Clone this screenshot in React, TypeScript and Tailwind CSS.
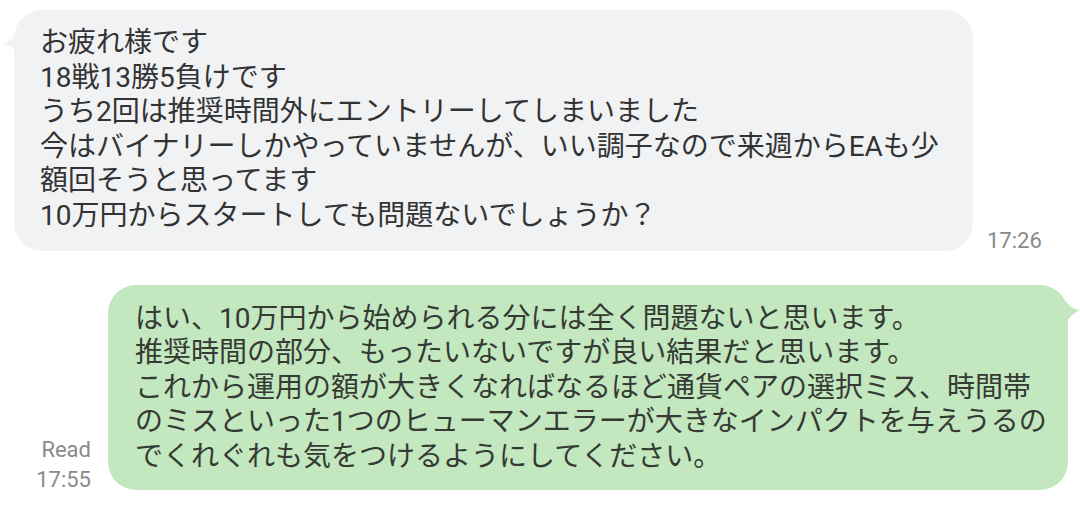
import React from 'react';

const incoming = [
  'お疲れ様です',
  '18戦13勝5負けです',
  'うち2回は推奨時間外にエントリーしてしまいました',
  '今はバイナリーしかやっていませんが、いい調子なので来週からEAも少',
  '額回そうと思ってます',
  '10万円からスタートしても問題ないでしょうか？',
];

const outgoing = [
  'はい、10万円から始められる分には全く問題ないと思います。',
  '推奨時間の部分、もったいないですが良い結果だと思います。',
  'これから運用の額が大きくなればなるほど通貨ペアの選択ミス、時間帯',
  'のミスといった1つのヒューマンエラーが大きなインパクトを与えうるの',
  'でくれぐれも気をつけるようにしてください。',
];

const App: React.FC = () => {
  return (
    <div className="w-[1080px] h-[512px] bg-white overflow-hidden font-['Roboto','Noto_Sans_CJK_JP',sans-serif]">
      {/* received message */}
      <div className="flex items-end pl-[14px] pt-[10px]">
        <div className="relative w-[959px] rounded-[28px] bg-[#f1f2f4] pl-[26px] pt-[16px] pb-[17px] text-[28px] leading-[34.6px] text-[#333333]">
          <svg className="absolute left-[-11px] top-[22px]" width="16" height="22" viewBox="0 0 16 22">
            <path d="M16 0 Q10 8 0 12 Q9 13 16 22 Z" fill="#f1f2f4" />
          </svg>
          {incoming.map((line, i) => (
            <div key={i} className="whitespace-nowrap">{line}</div>
          ))}
        </div>
        <div className="ml-[14px] mb-[-3px] text-[22px] leading-[26px] text-[#8a8a8a]">17:26</div>
      </div>

      {/* sent message */}
      <div className="flex items-end justify-end pr-[12px] mt-[34px]">
        <div className="mr-[17px] mb-[-5px] text-right text-[22px] leading-[30px] text-[#8a8a8a]">
          <div>Read</div>
          <div>17:55</div>
        </div>
        <div className="relative w-[960px] rounded-[28px] bg-[#c3e7be] pl-[27px] pt-[17px] pb-[15px] text-[28px] leading-[34.6px] text-[#353a35]">
          <svg className="absolute right-[-12px] top-[14px]" width="16" height="26" viewBox="0 0 16 26">
            <path d="M0 0 Q6 10 16 11 Q8 14 0 26 Z" fill="#c3e7be" />
          </svg>
          {outgoing.map((line, i) => (
            <div key={i} className="whitespace-nowrap">{line}</div>
          ))}
        </div>
      </div>
    </div>
  );
};

export default App;
